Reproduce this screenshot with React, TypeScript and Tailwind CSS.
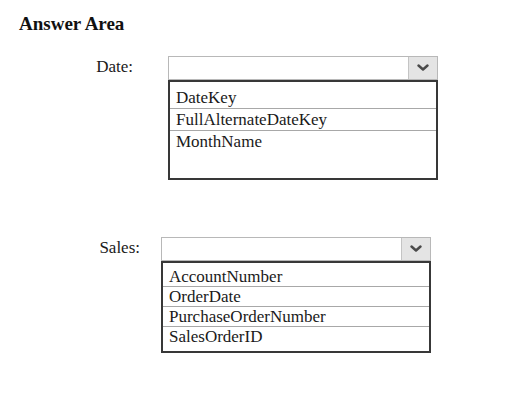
import React from 'react';

// Drop-down answer area: label, empty combo box, and the open option list beneath it
const Chevron = () => (
  <svg width="12" height="8" viewBox="0 0 12 8" className="block">
    <path d="M1.5 1.5 L6 5.5 L10.5 1.5" fill="none" stroke="#4a4a4a" strokeWidth="2.4" strokeLinecap="round" strokeLinejoin="round" />
  </svg>
);

interface DropDownProps {
  label: string;
  labelWidth: string;
  boxLeft: string;
  listHeight: string;
  firstPad: string;
  rowLeading: string;
  options: string[];
}

const DropDown = ({ label, labelWidth, boxLeft, listHeight, firstPad, rowLeading, options }: DropDownProps) => (
  <div className="flex items-start">
    <div className={`${labelWidth} pt-[1px] text-right text-[17px] leading-[20px] text-[#1a1a1a]`}>{label}</div>
    <div className={`${boxLeft} w-[270px]`}>
      <div className="flex h-[24px] border border-[#b8b8b8] bg-white">
        <div className="flex-1" />
        <div className="flex w-[29px] items-center justify-center border-l border-[#c4c4c4] bg-[#e4e4e4]">
          <Chevron />
        </div>
      </div>
      <div className={`${listHeight} border-2 border-[#383838] bg-white`}>
        {options.map((o, i) => (
          <div
            key={o}
            className={`${i === 0 ? firstPad : ''} ${i < options.length - 1 ? 'border-b border-[#a8a8a8]' : ''} ${rowLeading} pl-[6px] text-[17px] text-[#1a1a1a]`}
          >
            {o}
          </div>
        ))}
      </div>
    </div>
  </div>
);

export default function App() {
  return (
    <div className="h-[418px] w-[509px] bg-white pl-[19px] pt-[12px]" style={{ fontFamily: '"Liberation Serif", "Times New Roman", serif' }}>
      <h1 className="text-[19px] font-bold leading-[23px] text-[#111]">Answer Area</h1>
      <div className="mt-[21px]">
        <DropDown
          label="Date:"
          labelWidth="w-[114px]"
          boxLeft="ml-[35px]"
          listHeight="h-[100px]"
          firstPad="pt-[5px]"
          rowLeading="leading-[21px]"
          options={['DateKey', 'FullAlternateDateKey', 'MonthName']}
        />
      </div>
      <div className="mt-[57px]">
        <DropDown
          label="Sales:"
          labelWidth="w-[121px]"
          boxLeft="ml-[21px]"
          listHeight="h-[92px]"
          firstPad="pt-[4px]"
          rowLeading="leading-[19px]"
          options={['AccountNumber', 'OrderDate', 'PurchaseOrderNumber', 'SalesOrderID']}
        />
      </div>
    </div>
  );
}
